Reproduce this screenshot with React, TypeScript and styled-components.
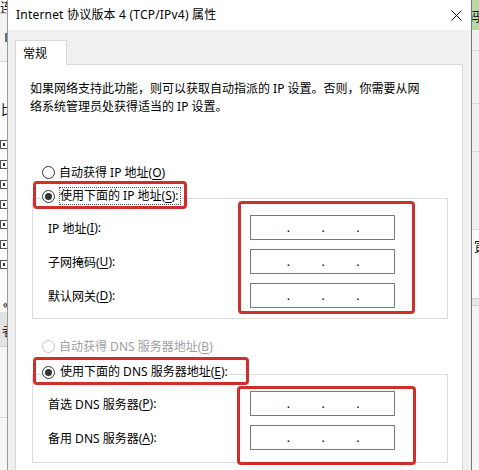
import React from "react";
import styled, { createGlobalStyle } from "styled-components";

const FONT = `"Noto Sans", "Noto Sans CJK SC", sans-serif`;

const Global = createGlobalStyle`
  html, body { margin: 0; padding: 0; background: #f0f0f0; }
  body {
    font-family: ${FONT};
    font-size: 12px;
    color: #000;
  }
`;

const Screen = styled.div`
  width: 479px;
  height: 470px;
  display: flex;
  overflow: hidden;
`;

/* ---------- background windows ---------- */
const LeftBg = styled.div`
  width: 7px;
  flex: none;
  background: #f7f7f7;
  display: flex;
  flex-direction: column;
  overflow: hidden;
`;

const RightBg = styled.div`
  width: 7px;
  flex: none;
  background: #eeeeee;
  display: flex;
  flex-direction: column;
  overflow: hidden;
`;

const BgCell = styled.div<{ h: number; bg?: string; line?: string }>`
  height: ${(p) => p.h}px;
  flex: none;
  background: ${(p) => p.bg || "transparent"};
  border-bottom: ${(p) => (p.line ? `1px solid ${p.line}` : "none")};
  display: flex;
  align-items: center;
  justify-content: flex-end;
  overflow: hidden;
  font-family: "Noto Sans CJK SC", sans-serif;
  font-size: 13px;
  line-height: 1;
  white-space: nowrap;
`;

const CutText = styled.span<{ shift: number }>`
  margin-right: ${(p) => p.shift}px;
  color: #111;
`;

const BgCheck = styled.span`
  width: 6px;
  height: 7px;
  border: 1px solid #555;
  border-right: none;
  background: #fff;
  display: flex;
  align-items: center;
  justify-content: center;
  &::after {
    content: "";
    width: 2px;
    height: 3px;
    background: #333;
  }
`;

const BgMark = styled.span`
  width: 2px;
  height: 9px;
  background: #5a6f8a;
`;

/* ---------- dialog ---------- */
const Dialog = styled.div`
  width: 465px;
  flex: none;
  box-sizing: border-box;
  border-left: 1px solid #9a9a9a;
  border-right: 1px solid #777;
  display: flex;
  flex-direction: column;
  background: #f0f0f0;
`;

const TitleBar = styled.div`
  height: 30px;
  flex: none;
  background: #fff;
  display: flex;
  align-items: center;
  padding-left: 8px;
`;

const Title = styled.div`
  flex: 1;
  font-size: 12px;
  letter-spacing: 0.2px;
  line-height: 16px;
  color: #000;
`;

const CloseBtn = styled.div`
  width: 29px;
  height: 30px;
  display: flex;
  align-items: center;
  justify-content: center;
`;

const Body = styled.div`
  flex: 1;
  display: flex;
  flex-direction: column;
  padding: 10px 8px 0 7px;
  min-height: 0;
`;

const Tabs = styled.div`
  display: flex;
  height: 24px;
  flex: none;
  position: relative;
  z-index: 1;
`;

const Tab = styled.div`
  width: 52px;
  box-sizing: border-box;
  height: 25px;
  background: #fff;
  border: 1px solid #d9d9d9;
  border-bottom: none;
  padding-left: 7px;
  display: flex;
  align-items: center;
  font-size: 12px;
`;

const Panel = styled.div`
  flex: 1;
  background: #fff;
  border: 1px solid #d9d9d9;
  border-bottom: none;
  display: flex;
  flex-direction: column;
  padding-top: 15px;
`;

const Intro = styled.p`
  margin: 0 0 0 14px;
  line-height: 18px;
  font-size: 12px;
  white-space: nowrap;
`;

const RadioRow = styled.div<{ mt?: number; disabled?: boolean }>`
  display: flex;
  align-items: center;
  height: 20px;
  margin-top: ${(p) => p.mt || 0}px;
  margin-left: 26px;
  gap: 4px;
  color: ${(p) => (p.disabled ? "#a0a0a0" : "#000")};
  font-size: 12px;
`;

const Radio = styled.span<{ checked?: boolean; disabled?: boolean }>`
  width: 13px;
  height: 13px;
  box-sizing: border-box;
  border-radius: 50%;
  border: 1px solid ${(p) => (p.disabled ? "#c4c4c4" : "#333")};
  background: #fff;
  display: flex;
  align-items: center;
  justify-content: center;
  flex: none;
  &::after {
    content: "";
    width: 7px;
    height: 7px;
    border-radius: 50%;
    background: ${(p) => (p.checked ? "#333" : "transparent")};
  }
`;

const Group = styled.div<{ mt: number }>`
  margin: ${(p) => p.mt}px 14px 0 16px;
  border: 1px solid #dcdcdc;
  display: flex;
  flex-direction: column;
`;

const LegendBox = styled.div<{ w: number }>`
  width: ${(p) => p.w}px;
  height: 28px;
  box-sizing: border-box;
  margin-top: -18px;
  border: 3px solid #cf2f2a;
  border-radius: 4px;
  padding: 2px 0 0 6px;
  position: relative;
  z-index: 1;
`;

const Legend = styled.div`
  display: inline-flex;
  align-items: center;
  gap: 4px;
  height: 20px;
  background: #fff;
  font-size: 12px;
`;

const Focus = styled.span<{ focus?: boolean }>`
  border: 1px dotted ${(p) => (p.focus ? "#555" : "transparent")};
  line-height: 16px;
  padding: 0 1px 0 0;
`;

const GroupBody = styled.div<{ pb: number }>`
  display: flex;
  padding-bottom: ${(p) => p.pb}px;
`;

const Labels = styled.div`
  margin: 6px 0 0 15px;
  display: flex;
  flex-direction: column;
  gap: 9px;
`;

const Label = styled.div`
  height: 25px;
  display: flex;
  align-items: center;
  font-size: 12px;
`;

const InputsBox = styled.div<{ mt: number; mr: number; mb: number; pad: string }>`
  margin: ${(p) => p.mt}px ${(p) => p.mr}px ${(p) => p.mb}px auto;
  padding: ${(p) => p.pad};
  border: 3px solid #cf2f2a;
  border-radius: 4px;
  display: flex;
  flex-direction: column;
  gap: 9px;
  position: relative;
  z-index: 1;
`;

const IpField = styled.div`
  width: 145px;
  height: 25px;
  box-sizing: border-box;
  border: 1px solid #7a7a7a;
  background: #fff;
  display: grid;
  grid-template-columns: 1fr 3px 1fr 3px 1fr 3px 1fr;
  padding: 0 3px 0 4px;
  align-items: center;
`;

const Dot = styled.span`
  font-size: 12px;
  line-height: 12px;
  text-align: center;
`;

const U = styled.u`
  text-decoration-thickness: 1px;
  text-underline-offset: 2px;
`;

function IpInput() {
  return (
    <IpField>
      <span />
      <Dot>.</Dot>
      <span />
      <Dot>.</Dot>
      <span />
      <Dot>.</Dot>
      <span />
    </IpField>
  );
}

function CloseIcon() {
  return (
    <svg width="11" height="11" viewBox="0 0 11 11">
      <path d="M0.5 0.5 L10.5 10.5 M10.5 0.5 L0.5 10.5" stroke="#111" strokeWidth="1" fill="none" />
    </svg>
  );
}

export default function App() {
  return (
    <>
      <Global />
      <Screen>
        <LeftBg>
          <BgCell h={13} bg="#fff" line="#d0d0d0"><CutText shift={-6}>连</CutText></BgCell>
          <BgCell h={17} bg="#f3f3f3" />
          <BgCell h={12} bg="#f3f3f3"><BgMark /></BgCell>
          <BgCell h={18} bg="#f3f3f3" line="#d6d6d6" />
          <BgCell h={38} bg="#fafafa" />
          <BgCell h={16} bg="#fafafa"><CutText shift={-7}>比</CutText></BgCell>
          <BgCell h={18} bg="#fafafa" />
          {[0, 1, 2, 3, 4, 5, 6].map((i) => (
            <BgCell key={i} h={20} bg="#fafafa"><BgCheck /></BgCell>
          ))}
          <BgCell h={20} bg="#fafafa" />
          <BgCell h={18} bg="#fafafa"><CutText shift={-2}>«</CutText></BgCell>
          <BgCell h={34} bg="#e3e3e3" line="#cfcfcf"><CutText shift={-8}>者</CutText></BgCell>
          <BgCell h={70} bg="#f6f6f6" line="#d8d8d8" />
          <BgCell h={60} bg="#f6f6f6" />
        </LeftBg>

        <Dialog>
          <TitleBar>
            <Title>Internet 协议版本 4 (TCP/IPv4) 属性</Title>
            <CloseBtn><CloseIcon /></CloseBtn>
          </TitleBar>
          <Body>
            <Tabs><Tab>常规</Tab></Tabs>
            <Panel>
              <Intro>
                如果网络支持此功能，则可以获取自动指派的 IP 设置。否则，你需要从网
                <br />
                络系统管理员处获得适当的 IP 设置。
              </Intro>

              <RadioRow mt={46}>
                <Radio />
                <span>自动获得 IP 地址(<U>O</U>)</span>
              </RadioRow>

              <Group mt={16}>
                <LegendBox w={154}>
                  <Legend>
                    <Radio checked />
                    <Focus focus>使用下面的 IP 地址(<U>S</U>):</Focus>
                  </Legend>
                </LegendBox>
                <GroupBody pb={4}>
                  <Labels>
                    <Label>IP 地址(<U>I</U>):</Label>
                    <Label>子网掩码(<U>U</U>):</Label>
                    <Label>默认网关(<U>D</U>):</Label>
                  </Labels>
                  <InputsBox mt={-8} mr={32} mb={0} pad="11px 17px 3px 9px">
                    <IpInput />
                    <IpInput />
                    <IpInput />
                  </InputsBox>
                </GroupBody>
              </Group>

              <RadioRow mt={17} disabled>
                <Radio disabled />
                <span>自动获得 DNS 服务器地址(<U>B</U>)</span>
              </RadioRow>

              <Group mt={18}>
                <LegendBox w={216}>
                  <Legend>
                    <Radio checked />
                    <Focus>使用下面的 DNS 服务器地址(<U>E</U>):</Focus>
                  </Legend>
                </LegendBox>
                <GroupBody pb={0}>
                  <Labels>
                    <Label>首选 DNS 服务器(<U>P</U>):</Label>
                    <Label>备用 DNS 服务器(<U>A</U>):</Label>
                  </Labels>
                  <InputsBox mt={1} mr={31} mb={-3} pad="2px 18px 12px 10px">
                    <IpInput />
                    <IpInput />
                  </InputsBox>
                </GroupBody>
              </Group>
            </Panel>
          </Body>
        </Dialog>

        <RightBg>
          <BgCell h={30} bg="#b7d9a0"><CutText shift={-5}>码:</CutText></BgCell>
          <BgCell h={20} bg="#f0f0f0" line="#dadada" />
          <BgCell h={52} bg="#f0f0f0" line="#dadada" />
          <BgCell h={47} bg="#f0f0f0" line="#dadada" />
          <BgCell h={77} bg="#f0f0f0" line="#dadada" />
          <BgCell h={30} bg="#fafafa"><CutText shift={-8}>寅</CutText></BgCell>
          <BgCell h={38} bg="#fafafa" line="#cfcfcf" />
          <BgCell h={6} bg="#e6e6e6" line="#cfcfcf" />
          <BgCell h={165} bg="#f5f5f5" />
        </RightBg>
      </Screen>
    </>
  );
}
